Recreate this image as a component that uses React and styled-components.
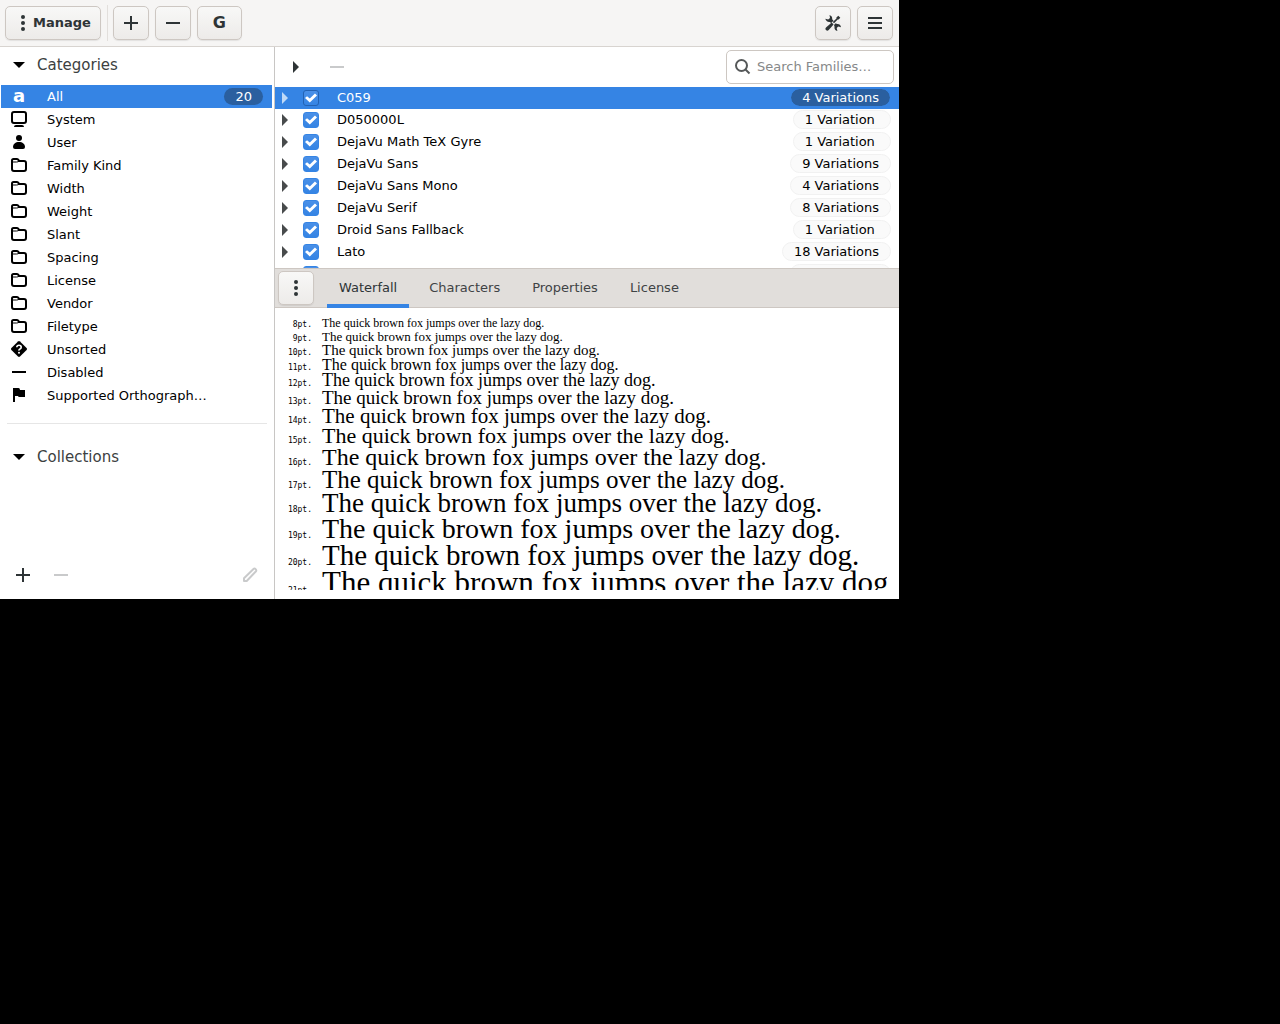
import React from "react";
import styled, { createGlobalStyle, css } from "styled-components";

const GlobalStyle = createGlobalStyle`
  *, *::before, *::after { box-sizing: border-box; }
  body {
    margin: 0;
    background: #000;
    font-family: "DejaVu Sans", sans-serif;
    font-size: 13px;
    color: #000;
  }
  button, input { font: inherit; color: inherit; }
  svg { display: block; flex: none; }
`;

const Window = styled.div`
  display: flex;
  flex-direction: column;
  width: 100%;
  max-width: 899px;
  height: 599px;
  max-height: 100vh;
  overflow: hidden;
  background: #fff;
`;

const HeaderBar = styled.header`
  display: flex;
  align-items: center;
  gap: 6px;
  height: 47px;
  flex: none;
  padding: 0 6px 1px 5px;
  background: #f6f5f4;
  border-bottom: 1px solid #d8d4d0;
`;

const Separator = styled.div`
  width: 1px;
  height: 36px;
  margin-right: -1px;
  background: #e2dfdc;
`;

const Spacer = styled.div`
  flex: 1;
`;

const PushButton = styled.button`
  display: inline-flex;
  align-items: center;
  justify-content: center;
  gap: 2px;
  height: 34px;
  min-width: 36px;
  padding: 0 ${(p) => p.$pad || 0}px;
  border: 1px solid #cdc7c2;
  border-radius: 5px;
  background: linear-gradient(#f8f8f7, #edebe9);
  box-shadow: 0 1px 1px rgba(0, 0, 0, 0.08);
  color: #2e3436;
  font-size: ${(p) => p.$size || 13}px;
  font-weight: bold;
`;

const Body = styled.div`
  display: flex;
  flex: 1;
  min-height: 0;
`;

const Sidebar = styled.nav`
  display: flex;
  flex-direction: column;
  width: 275px;
  flex: none;
  border-right: 1px solid #c8c6c4;
`;

const Section = styled.button`
  display: flex;
  align-items: center;
  gap: 10px;
  height: 38px;
  flex: none;
  padding: 0 11px 2px;
  border: 0;
  background: none;
  color: #3c3f41;
  font-size: 15px;
  svg { color: #000; }
`;

const CategoryList = styled.ul`
  margin: 0;
  padding: 0 2px 0 1px;
  list-style: none;
`;

const Category = styled.button`
  display: flex;
  align-items: center;
  width: 100%;
  height: 23px;
  padding: 0 9px 0 10px;
  border: 0;
  background: ${(p) => (p.$active ? "#3584e4" : "none")};
  color: ${(p) => (p.$active ? "#fff" : "#000")};
  text-align: left;
  svg { margin-bottom: 1px; }
`;

const CategoryName = styled.span`
  flex: 1;
  margin-left: 20px;
`;

const LetterIcon = styled.span`
  width: 16px;
  font-size: 18px;
  line-height: 16px;
  font-weight: bold;
  text-align: center;
  padding-bottom: 1px;
`;

const Count = styled.span`
  padding: 0 11px;
  border-radius: 9px;
  background: #2a5f9f;
  line-height: 17px;
`;

const Rule = styled.hr`
  width: 260px;
  margin: 16px 7px 15px;
  border: 0;
  border-top: 1px solid #e6e6e6;
`;

const ActionRow = styled.div`
  display: flex;
  align-items: center;
  gap: 22px;
  margin-top: auto;
  padding: 0 16px 16px 15px;
`;

const IconButton = styled.button`
  display: flex;
  padding: 0;
  border: 0;
  background: none;
  color: #2e3436;
  &:disabled { color: #c9cacb; }
`;

const Main = styled.main`
  display: flex;
  flex-direction: column;
  flex: 1;
  min-width: 0;
`;

const FamilyTools = styled.div`
  display: flex;
  align-items: center;
  gap: 25px;
  height: 40px;
  flex: none;
  padding: 0 5px 0 13px;
`;

const SearchBox = styled.label`
  display: flex;
  align-items: center;
  gap: 6px;
  width: 168px;
  height: 34px;
  margin-left: auto;
  padding: 0 8px;
  border: 1px solid #cdc7c2;
  border-radius: 5px;
  color: #555859;
`;

const SearchInput = styled.input`
  flex: 1;
  min-width: 0;
  padding: 0 0 2px;
  border: 0;
  outline: 0;
  background: none;
  color: #2e3436;
  &::placeholder { color: #868889; opacity: 1; }
`;

const FamilyList = styled.ul`
  height: 181px;
  flex: none;
  margin: 0;
  padding: 0;
  overflow: hidden;
  list-style: none;
`;

const Family = styled.li`
  display: flex;
  align-items: center;
  height: 22px;
  padding: 0 8px 0 2px;
  ${(p) =>
    p.$active &&
    css`
      background: #3584e4;
      color: #fff;
    `}
`;

const Expander = styled(IconButton)`
  color: ${(p) => (p.$active ? "#bfd9f7" : "#484b4c")};
`;

const FamilyLabel = styled.label`
  display: flex;
  align-items: center;
  gap: 18px;
  flex: 1;
  margin-left: 10px;
`;

const FamilyName = styled.span`
  padding-bottom: 2px;
`;

const Check = styled.input`
  appearance: none;
  display: grid;
  place-items: center;
  width: 16px;
  height: 16px;
  margin: 0;
  border: 1px solid ${(p) => (p.$active ? "#2362b3" : "#3584e4")};
  border-radius: 3px;
  background: linear-gradient(#4a90e8, #3584e4);
  &:checked::after {
    content: "";
    width: 12px;
    height: 10px;
    background: #fff;
    clip-path: polygon(0 50%, 17% 32%, 40% 56%, 83% 6%, 100% 24%, 40% 94%);
  }
`;

const Pill = styled.span`
  margin-bottom: 1px;
  padding: 0 11px;
  border: 1px solid ${(p) => (p.$active ? "#3584e4" : "#f1f1f1")};
  border-radius: 10px;
  background: ${(p) => (p.$active ? "#2a5f9f" : "#fafafa")};
  background-clip: padding-box;
  line-height: 17px;
`;

const TabBar = styled.div`
  display: flex;
  align-items: center;
  height: 40px;
  flex: none;
  padding: 0 3px;
  border: solid #cdc7c2;
  border-width: 1px 0;
  background: #e1dedb;
`;

const Tabs = styled.div`
  display: flex;
  align-self: stretch;
  gap: 8px;
  margin: 0 0 -1px 13px;
`;

const Tab = styled.button`
  padding: 2px 12px 0;
  border: 0;
  border-bottom: 4px solid ${(p) => (p.$active ? "#3584e4" : "transparent")};
  background: none;
  color: ${(p) => (p.$active ? "#2e3436" : "#3f4345")};
`;

const Preview = styled.section`
  flex: 1;
  min-height: 0;
  margin: 9px 12px 9px;
  overflow: hidden;
`;

const Sample = styled.div`
  display: flex;
  align-items: baseline;
  gap: 10px;
  height: ${(p) => p.$line}px;
  line-height: ${(p) => p.$line}px;
  white-space: nowrap;
`;

const PointSize = styled.span`
  width: 25px;
  flex: none;
  font-family: "DejaVu Sans Mono", monospace;
  font-size: 8px;
  text-align: right;
`;

const SampleText = styled.span`
  font-family: "Liberation Serif", serif;
  font-size: ${(p) => p.$size}px;
`;

const Icon = ({ children, ...rest }) => (
  <svg width="16" height="16" viewBox="0 0 16 16" fill="currentColor" aria-hidden="true" {...rest}>
    {children}
  </svg>
);

const Dots = () => (
  <Icon><circle cx="8" cy="2" r="2" /><circle cx="8" cy="8" r="2" /><circle cx="8" cy="14" r="2" /></Icon>
);
const Plus = () => <Icon><path d="M7 1h2v6h6v2H9v6H7V9H1V7h6z" /></Icon>;
const Minus = () => <Icon><path d="M1 7h14v2H1z" /></Icon>;
const Menu = () => <Icon><path d="M1 2h14v2H1zM1 7h14v2H1zM1 12h14v2H1z" /></Icon>;
const Down = () => <Icon><path d="M2 5h12L8 11z" /></Icon>;
const Right = () => <Icon><path d="M5 2v12l6-6z" /></Icon>;
const Tools = () => (
  <Icon>
    <path d="M4.500 0Q7.500 1 7.200 4.200L8.500 5.800 6.200 8 4.700 6.900Q1.200 7.200.3 3.800L3.200 4.600 5 3z" />
    <path d="M13.300.8 15.300 2.800 13.600 4.600 12.700 4.500 9 8.300 7.800 7.100 11.500 3.400 11.400 2.500z" />
    <path d="M6.700 7.600 8.600 9.400 3.700 15.100Q2.300 16.300 1 15.100-.2 13.800 1 12.400z" />
    <path d="M9 9.900 10.700 8.300 12 9.100Q15.300 8.700 16 12.300L13.200 11.500 11.700 12.900 12.400 16Q9 15.200 9.500 11.400z" />
  </Icon>
);
const Search = () => (
  <Icon fill="none" stroke="currentColor" strokeWidth="2">
    <circle cx="6.500" cy="6.500" r="5.500" /><path d="M10.500 10.500 14.500 14.500" />
  </Icon>
);
const Pencil = () => (
  <Icon fill="none" stroke="currentColor" strokeWidth="2" strokeLinejoin="round">
    <path d="M2 14V11.300L11.500 2Q12.500 1 13.600 2.100T14 4.300L4.700 14z" />
  </Icon>
);
const Display = () => (
  <Icon><rect x="1" y="1" width="14" height="11" rx="2" fill="none" stroke="currentColor" strokeWidth="2" /><path d="M5 14h6q2 0 2 2H3q0-2 2-2z" /></Icon>
);
const Person = () => (
  <Icon><circle cx="8" cy="4" r="3" /><path d="M2 13c0-3 2.500-5 6-5s6 2 6 5q0 2-2 2H4q-2 0-2-2z" /></Icon>
);
const Folder = () => (
  <Icon fill="none" stroke="currentColor" strokeWidth="2">
    <path d="M1 12V3.500Q1 2 2.500 2H6Q7 2 7.500 3L8 4h5q2 0 2 2v6q0 2-2 2H3q-2 0-2-2z" /><path d="M1 5h4.500Q7.500 5 8 4" strokeWidth="1" />
  </Icon>
);
const Question = () => (
  <Icon>
    <path d="M7 .4Q8-.4 9 .4L15.600 7Q16.400 8 15.600 9L9 15.600Q8 16.400 7 15.600L.4 9Q-.4 8 .4 7z" />
    <path d="M5.800 6.300Q5.800 4.200 8 4.200t2.200 2Q10.200 7.400 9 8T8 9.600" fill="none" stroke="#fff" strokeWidth="1.600" />
    <circle cx="8" cy="11.700" r="1" fill="#fff" />
  </Icon>
);
const Flag = () => <Icon><path d="M2 1h5.500q1.500 0 1.500 2h5v7H8.500Q7 10 7 9H4v6H2z" /></Icon>;
const Letter = () => <LetterIcon aria-hidden="true">a</LetterIcon>;

const categories = [
  ["All", Letter, 20],
  ["System", Display],
  ["User", Person],
  ["Family Kind", Folder],
  ["Width", Folder],
  ["Weight", Folder],
  ["Slant", Folder],
  ["Spacing", Folder],
  ["License", Folder],
  ["Vendor", Folder],
  ["Filetype", Folder],
  ["Unsorted", Question],
  ["Disabled", Minus],
  ["Supported Orthograph…", Flag],
];

const families = [
  ["C059", 4],
  ["D050000L", 1],
  ["DejaVu Math TeX Gyre", 1],
  ["DejaVu Sans", 9],
  ["DejaVu Sans Mono", 4],
  ["DejaVu Serif", 8],
  ["Droid Sans Fallback", 1],
  ["Lato", 18],
  ["Nimbus Mono PS", 4],
];

const tabs = ["Waterfall", "Characters", "Properties", "License"];

// point size, text size in px, line height in px
const samples = [
  [8, 12, 13],
  [9, 13, 13],
  [10, 15, 14],
  [11, 16, 15],
  [12, 18, 17],
  [13, 19, 18],
  [14, 21, 19],
  [15, 22, 20],
  [16, 24, 22],
  [17, 25, 23],
  [18, 27, 25],
  [19, 28, 26],
  [20, 29, 27],
  [21, 31, 28],
];

export default function App() {
  return (
    <>
      <GlobalStyle />
      <Window>
        <HeaderBar>
          <PushButton $pad={9}><Dots />Manage</PushButton>
          <Separator />
          <PushButton aria-label="Add"><Plus /></PushButton>
          <PushButton aria-label="Remove"><Minus /></PushButton>
          <PushButton $pad={15} $size={16}>G</PushButton>
          <Spacer />
          <PushButton aria-label="Tools"><Tools /></PushButton>
          <PushButton aria-label="Main menu"><Menu /></PushButton>
        </HeaderBar>
        <Body>
          <Sidebar>
            <Section><Down />Categories</Section>
            <CategoryList>
              {categories.map(([name, Glyph, count]) => (
                <li key={name}>
                  <Category $active={name === "All"}>
                    <Glyph />
                    <CategoryName>{name}</CategoryName>
                    {count && <Count>{count}</Count>}
                  </Category>
                </li>
              ))}
            </CategoryList>
            <Rule />
            <Section><Down />Collections</Section>
            <ActionRow>
              <IconButton aria-label="Add collection"><Plus /></IconButton>
              <IconButton aria-label="Remove collection" disabled><Minus /></IconButton>
              <Spacer />
              <IconButton aria-label="Edit collection" disabled><Pencil /></IconButton>
            </ActionRow>
          </Sidebar>
          <Main>
            <FamilyTools>
              <IconButton aria-label="Expand all"><Right /></IconButton>
              <IconButton aria-label="Remove family" disabled><Minus /></IconButton>
              <SearchBox>
                <Search />
                <SearchInput type="text" aria-label="Search Families" placeholder="Search Families…" />
              </SearchBox>
            </FamilyTools>
            <FamilyList>
              {families.map(([name, count], i) => (
                <Family key={name} $active={i === 0}>
                  <Expander $active={i === 0} aria-label={"Expand " + name}><Right /></Expander>
                  <FamilyLabel>
                    <Check type="checkbox" defaultChecked $active={i === 0} />
                    <FamilyName>{name}</FamilyName>
                  </FamilyLabel>
                  <Pill $active={i === 0}>{count === 1 ? "1 Variation\u00a0" : count + " Variations"}</Pill>
                </Family>
              ))}
            </FamilyList>
            <TabBar>
              <PushButton aria-label="Preview options"><Dots /></PushButton>
              <Tabs role="tablist">
                {tabs.map((name, i) => (
                  <Tab key={name} role="tab" aria-selected={i === 0} $active={i === 0}>{name}</Tab>
                ))}
              </Tabs>
            </TabBar>
            <Preview>
              {samples.map(([pt, size, line]) => (
                <Sample key={pt} $line={line}>
                  <PointSize>{pt}pt.</PointSize>
                  <SampleText $size={size}>The quick brown fox jumps over the lazy dog.</SampleText>
                </Sample>
              ))}
            </Preview>
          </Main>
        </Body>
      </Window>
    </>
  );
}
